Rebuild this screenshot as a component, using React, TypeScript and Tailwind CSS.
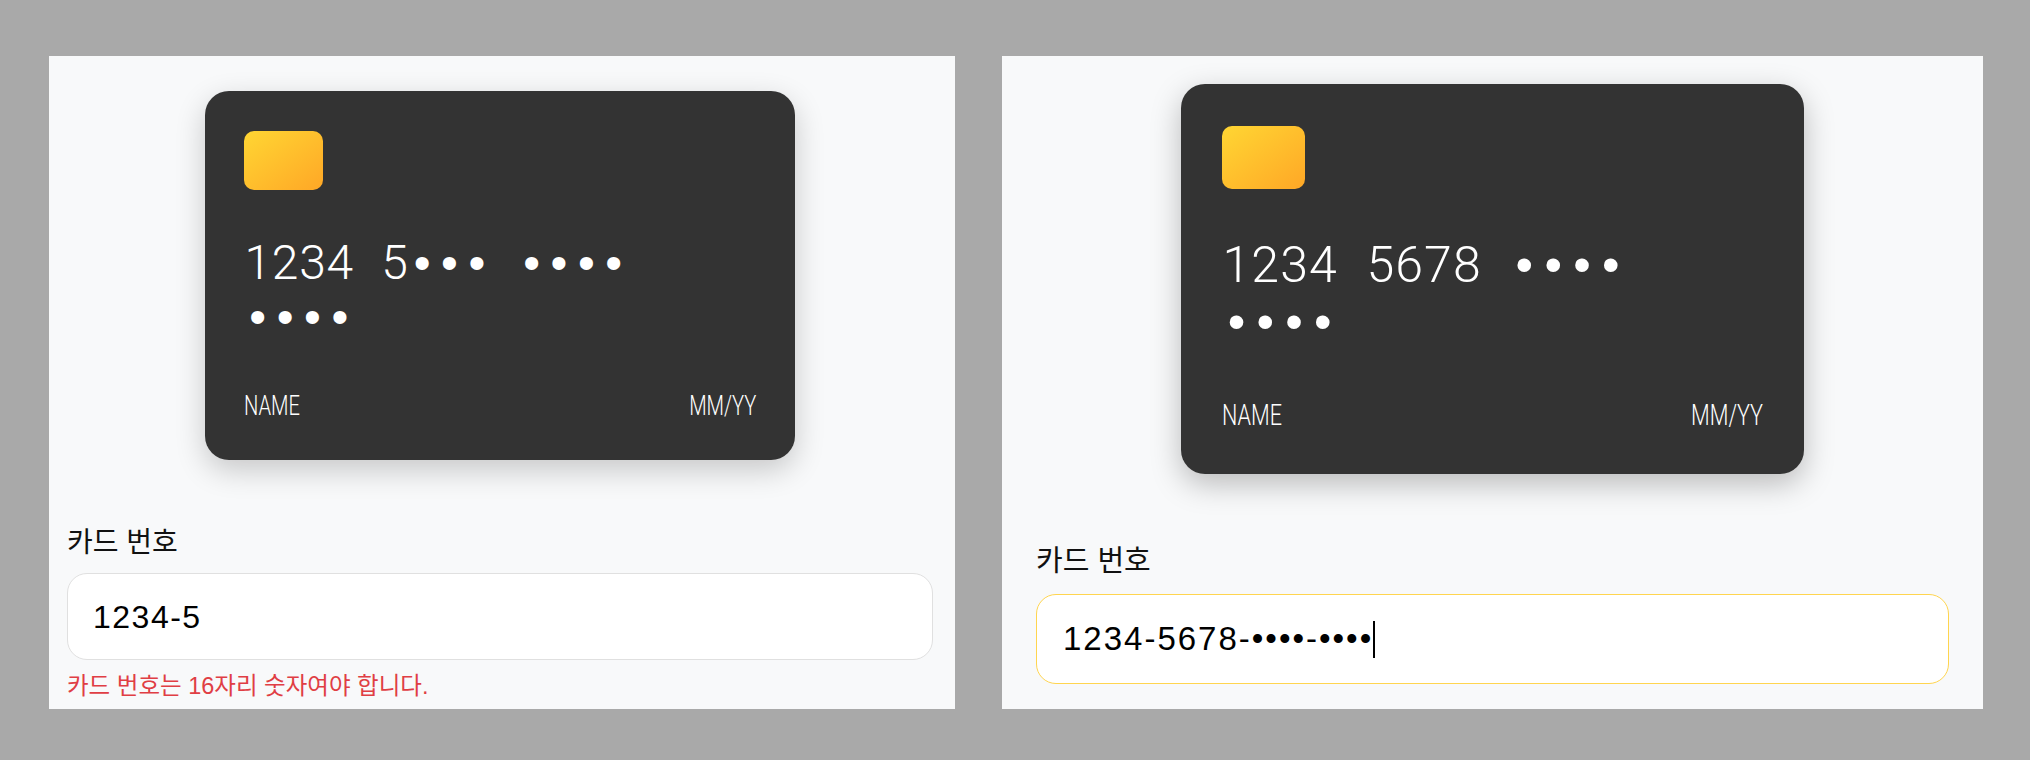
import React from "react";

const fontStack = "font-['Liberation_Sans','Noto_Sans_CJK_KR',sans-serif]";

interface CardFormProps {
  number: string[];
  value: string;
  focused?: boolean;
  error?: string;
  large?: boolean;
}

// card digits sit in fixed cells, like a monospace font
function Glyphs({ line, large }: { line: string; large?: boolean }) {
  return (
    <div className={large ? "flex h-[57px]" : "flex h-[54px]"}>
      {line.split("").map((ch, i) => (
        <span
          key={i}
          className={`${large ? "w-[28.8px]" : "w-[27.4px]"} shrink-0 text-center whitespace-pre ${
            ch === "•" ? "font-['Liberation_Sans',sans-serif] font-normal" : "font-['Roboto',sans-serif] font-light"
          }`}
        >
          {ch}
        </span>
      ))}
    </div>
  );
}

function CardForm({ number, value, focused, error, large }: CardFormProps) {
  return (
    <div className={large ? "w-[981px] h-[653px] bg-[#f8f9fa] overflow-hidden pl-[34px] pr-[34px] pt-[28px]" : "w-[906px] h-[653px] bg-[#f8f9fa] overflow-hidden pl-[18px] pr-[22px] pt-[35px]"}>
      <div
        className={
          large
            ? "mx-auto w-[623px] h-[390px] bg-[#333333] rounded-[24px] shadow-[0_10px_30px_rgba(0,0,0,0.25)] pt-[42px] px-[41px] pb-[42px] flex flex-col text-white"
            : "mx-auto w-[590px] h-[369px] bg-[#333333] rounded-[24px] shadow-[0_10px_30px_rgba(0,0,0,0.2)] pt-[40px] px-[39px] pb-[38px] flex flex-col text-white"
        }
      >
        <div
          className={
            large
              ? "w-[83px] h-[63px] rounded-[10px] bg-gradient-to-br from-[#ffd633] to-[#ffa726] shrink-0"
              : "w-[79px] h-[59px] rounded-[10px] bg-gradient-to-br from-[#ffd633] to-[#ffa726] shrink-0"
          }
        />
        <div
          className={
            large
              ? "mt-[48px] text-[50px] leading-[57px]"
              : "mt-[46px] text-[48px] leading-[54px]"
          }
        >
          {number.map((line) => (
            <Glyphs key={line} line={line} large={large} />
          ))}
        </div>
        <div className={large ? "mt-auto flex justify-between text-[30px] leading-[36px] translate-y-[1px] font-['Roboto',sans-serif] font-light" : "mt-auto flex justify-between text-[28px] leading-[34px] translate-y-[1px] font-['Roboto',sans-serif] font-light"}>
          <span className="inline-block origin-left scale-x-[0.72]">NAME</span>
          <span className="inline-block origin-right scale-x-[0.72]">MM/YY</span>
        </div>
      </div>
      <label className={large ? `block mt-[69px] text-[29px] leading-[36px] text-[#111] ${fontStack}` : `block mt-[66px] text-[28px] leading-[34px] text-[#111] ${fontStack}`}>
        카드 번호
      </label>
      <div
        className={
          large
            ? `mt-[15px] h-[90px] rounded-[20px] bg-white border border-[#ffd54f] pl-[26px] flex items-center text-[33px] tracking-[2px] text-black ${fontStack}`
            : `mt-[13px] h-[87px] rounded-[20px] bg-white border border-[#e0e0e0] pl-[25px] flex items-center text-[32px] tracking-[1.5px] text-black ${fontStack}`
        }
      >
        {value}
        {focused && <span className="w-[2px] h-[37px] bg-black" />}
      </div>
      {error && <p className={`mt-[11px] text-[23.5px] leading-[30px] text-[#e03e44] ${fontStack}`}>{error}</p>}
    </div>
  );
}

export default function App() {
  return (
    <div className="w-[2030px] h-[760px] bg-[#a9a9a9] pt-[56px] pl-[49px] flex gap-[47px] items-start">
      <CardForm number={["1234 5••• ••••", "••••"]} value="1234-5" error="카드 번호는 16자리 숫자여야 합니다." />
      <CardForm large number={["1234 5678 ••••", "••••"]} value="1234-5678-••••-••••" focused />
    </div>
  );
}
